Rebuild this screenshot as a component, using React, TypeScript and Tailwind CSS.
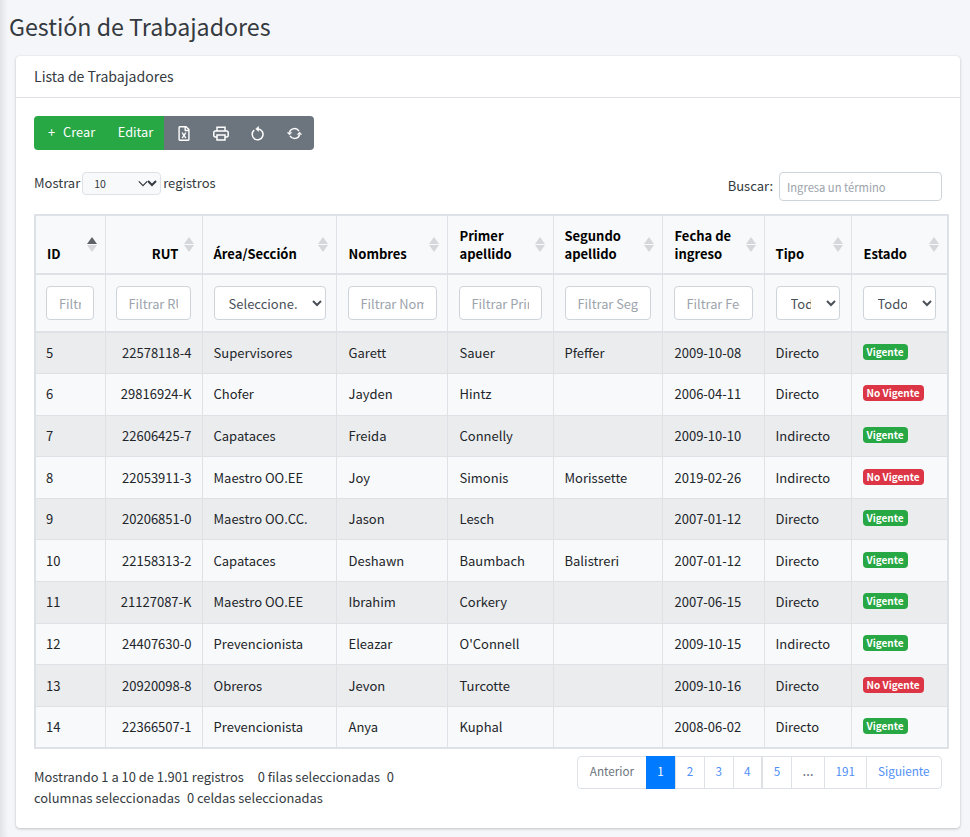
import { FaRegFileExcel } from "react-icons/fa";

const font = { fontFamily: '"Noto Sans CJK JP", "Noto Sans", sans-serif' };

const colWidths = [70, 97, 134, 111, 106, 109, 102, 87, 97];

const cellPad = ["pl-[10px]", "pr-[10px] text-right", "", "pl-[12px]", "pl-[12px]", "", "pl-[12px]", "", ""];

const rows = [
  ["5", "22578118-4", "Supervisores", "Garett", "Sauer", "Pfeffer", "2009-10-08", "Directo", "Vigente"],
  ["6", "29816924-K", "Chofer", "Jayden", "Hintz", "", "2006-04-11", "Directo", "No Vigente"],
  ["7", "22606425-7", "Capataces", "Freida", "Connelly", "", "2009-10-10", "Indirecto", "Vigente"],
  ["8", "22053911-3", "Maestro OO.EE", "Joy", "Simonis", "Morissette", "2019-02-26", "Indirecto", "No Vigente"],
  ["9", "20206851-0", "Maestro OO.CC.", "Jason", "Lesch", "", "2007-01-12", "Directo", "Vigente"],
  ["10", "22158313-2", "Capataces", "Deshawn", "Baumbach", "Balistreri", "2007-01-12", "Directo", "Vigente"],
  ["11", "21127087-K", "Maestro OO.EE", "Ibrahim", "Corkery", "", "2007-06-15", "Directo", "Vigente"],
  ["12", "24407630-0", "Prevencionista", "Eleazar", "O'Connell", "", "2009-10-15", "Indirecto", "Vigente"],
  ["13", "20920098-8", "Obreros", "Jevon", "Turcotte", "", "2009-10-16", "Directo", "No Vigente"],
  ["14", "22366507-1", "Prevencionista", "Anya", "Kuphal", "", "2008-06-02", "Directo", "Vigente"],
];

function SortArrows({ active }: { active?: boolean }) {
  return (
    <span className="absolute right-[8px] top-[21px] flex flex-col gap-[1px]">
      <span className={`h-0 w-0 border-x-[5px] border-b-[7px] border-x-transparent ${active ? "border-b-[#5f6368]" : "border-b-[#d5d7da]"}`} />
      <span className="h-0 w-0 border-x-[5px] border-t-[7px] border-x-transparent border-t-[#d5d7da]" />
    </span>
  );
}

function Th({ children, active, right, wide }: { children: React.ReactNode; active?: boolean; right?: boolean; wide?: boolean }) {
  return (
    <th className={`relative border border-[#dee2e6] border-b-2 px-[11px] pt-[11px] pb-[10px] align-bottom text-[13px] leading-[18px] font-bold text-[#000] ${right ? "text-right pr-[23px]" : "text-left"} ${wide ? "pl-[12px]" : ""}`}>
      {children}
      <SortArrows active={active} />
    </th>
  );
}

function FilterInput({ placeholder, pad = "" }: { placeholder: string; pad?: string }) {
  return (
    <td className={`border border-[#dee2e6] border-b-2 px-[11px] py-[11px] ${pad}`}>
      <input
        placeholder={placeholder}
        className="h-[34px] w-full rounded-[4px] border border-[#ced4da] bg-white px-[12px] text-[12.8px] placeholder:text-[#9ca3ab] outline-none"
      />
    </td>
  );
}

function FilterSelect({ label, pad = "" }: { label: string; pad?: string }) {
  return (
    <td className={`border border-[#dee2e6] border-b-2 px-[11px] py-[11px] ${pad}`}>
      <select className="h-[34px] w-full rounded-[4px] border border-[#ced4da] bg-white pl-[10px] pr-[12px] text-[13px] text-[#495057] outline-none">
        <option>{label}</option>
      </select>
    </td>
  );
}

function PageLink({ children, current, muted, digit, thick }: { children: React.ReactNode; current?: boolean; muted?: boolean; digit?: boolean; thick?: boolean }) {
  const tone = current ? "-my-px h-[33px] border-l-0 bg-[#007bff] text-white" : muted ? "h-full text-[#6c757d]" : "h-full text-[#4f8ff7]";
  return (
    <span className={`flex items-center justify-center border-l border-[#dee2e6] pb-[3px] first:border-l-0 ${digit ? "px-[10.6px]" : "px-[11.5px]"} ${thick ? "border-l-2" : ""} ${tone}`}>
      {children}
    </span>
  );
}

export default function App() {
  return (
    <div style={font} className="relative min-h-[837px] overflow-hidden bg-[#f4f6f9] text-[13px] text-[#343a40]">
      <div className="absolute inset-y-0 left-0 w-[8px] bg-gradient-to-r from-[#e2e3e6] to-[#f4f6f9]" />
      <h1 className="relative pl-[9px] pt-[10px] text-[23.2px] leading-[32px] font-normal text-[#343a40]">Gestión de Trabajadores</h1>

      <div className="relative mt-[14px] ml-[16px] h-[772px] w-[944px] rounded-[4px] bg-white shadow-[0_0_1px_rgba(0,0,0,0.125),0_1px_3px_rgba(0,0,0,0.2)]">
        <div className="flex h-[42px] items-center border-b border-[#dee2e6] px-[18px] text-[14.1px] text-[#343a40]">Lista de Trabajadores</div>

        <div className="px-[18px] pt-[18px]">
          <div className="flex h-[34px] w-[280px] overflow-hidden rounded-[4px] text-white">
            <div className="flex w-[130px] items-center bg-[#28a745] pb-[2px] text-[12.8px]">
              <span className="ml-[14px]">+</span>
              <span className="ml-[8px]">Crear</span>
              <span className="ml-[22.6px]">Editar</span>
            </div>
            <div className="flex flex-1 items-center bg-[#6c757d] pl-[14px]">
              <FaRegFileExcel className="h-[15px] w-[12px]" />
              <svg viewBox="0 0 16 15" className="ml-[23px] h-[15px] w-[16px]" fill="none" stroke="currentColor" strokeWidth="1.5">
                <path d="M4 5V1.2h8V5" />
                <path d="M4 11H2.2A1.4 1.4 0 0 1 .8 9.6V6.4A1.4 1.4 0 0 1 2.2 5h11.6a1.4 1.4 0 0 1 1.4 1.4v3.2a1.4 1.4 0 0 1-1.4 1.4H12" />
                <path d="M4 9h8v5H4z" />
              </svg>
              <svg viewBox="0 0 14 15" className="ml-[22px] h-[15px] w-[14px]" fill="none" stroke="currentColor" strokeWidth="1.5">
                <path d="M3.2 4.2A5.4 5.4 0 1 0 7 3" />
                <path d="M7.6 .2 4.6 2.9l3 2.7z" fill="currentColor" strokeWidth="0.4" />
              </svg>
              <svg viewBox="0 0 16 15" className="ml-[22px] h-[15px] w-[15px]" fill="none" stroke="currentColor" strokeWidth="1.5">
                <path d="M2.6 6.2A5.6 5.6 0 0 1 12.8 5" />
                <path d="M13.4 8.8A5.6 5.6 0 0 1 3.2 10" />
                <path d="M.2 6.4h5L2.6 9.2z" fill="currentColor" strokeWidth="0.4" />
                <path d="M15.8 8.6h-5l2.6-2.8z" fill="currentColor" strokeWidth="0.4" />
              </svg>
            </div>
          </div>

          <div className="mt-[22px] flex items-start justify-between">
            <div className="flex h-[23px] items-center text-[#343a40]">
              <span className="mb-[2px]">Mostrar</span>
              <span className="relative mx-[2px] flex">
                <select className="h-[23px] w-[79px] rounded-[4px] border border-[#dee2e6] bg-[#f8f9fa] pl-[7px] text-[10.5px] text-[#343a40] outline-none">
                  <option>10</option>
                </select>
                <svg viewBox="0 0 12 8" className="pointer-events-none absolute left-[56px] top-[8px] h-[7px] w-[10px]" fill="none" stroke="#343a40" strokeWidth="1.5">
                  <path d="M1 1.5l5 5 5-5" />
                </svg>
              </span>
              <span className="mb-[2px]">registros</span>
            </div>

            <div className="flex items-center">
              <span className="mb-[2px] mr-[6px]">Buscar:</span>
              <input
                placeholder="Ingresa un término"
                className="h-[29px] w-[163px] rounded-[4px] border border-[#ced4da] bg-white px-[7px] text-[11.2px] placeholder:text-[#9ca3ab] outline-none"
              />
            </div>
          </div>

          <table className="mt-[13px] w-[914px] max-w-none table-fixed border-collapse border-2 border-[#dee2e6] bg-[#f8f9fa] text-[13px] text-[#212529]">
            <colgroup>
              {colWidths.map((w, i) => (
                <col key={i} style={{ width: w }} />
              ))}
            </colgroup>
            <thead>
              <tr className="h-[58px]">
                <Th active>ID</Th>
                <Th right>RUT</Th>
                <Th>Área/Sección</Th>
                <Th wide>Nombres</Th>
                <Th wide>Primer apellido</Th>
                <Th>Segundo apellido</Th>
                <Th wide>Fecha de ingreso</Th>
                <Th>Tipo</Th>
                <Th wide>Estado</Th>
              </tr>
              <tr className="h-[58px]">
                <FilterInput placeholder="Filtrar ID" pad="pl-[10px]" />
                <FilterInput placeholder="Filtrar RUT" pad="pl-[10px]" />
                <FilterSelect label="Seleccione..." pad="pr-[10px]" />
                <FilterInput placeholder="Filtrar Nombres" pad="pr-[10px]" />
                <FilterInput placeholder="Filtrar Primer" />
                <FilterInput placeholder="Filtrar Segundo" />
                <FilterInput placeholder="Filtrar Fecha" />
                <FilterSelect label="Todos" />
                <FilterSelect label="Todos" />
              </tr>
            </thead>
            <tbody>
              {rows.map((r, i) => (
                <tr key={r[0]} className={`h-[41.6px] ${i % 2 === 0 ? "bg-[#ebecee]" : "bg-[#f8f9fa]"}`}>
                  {r.map((c, j) => (
                    <td key={j} className={`border border-[#dee2e6] px-[11px] py-0 leading-[20px] whitespace-nowrap ${cellPad[j]}`}>
                      {j === 8 ? (
                        <span className={`relative top-[-2px] inline-block rounded-[4px] px-[4px] text-[10px] leading-[16px] font-bold text-white ${c === "Vigente" ? "bg-[#28a745]" : "bg-[#dc3545]"}`}>{c}</span>
                      ) : (
                        c
                      )}
                    </td>
                  ))}
                </tr>
              ))}
            </tbody>
          </table>

          <div className="mt-[7px] flex items-start justify-between">
            <div className="mt-[10px] w-[370px] text-[12.9px] leading-[21px] text-[#343a40]">
              Mostrando 1 a 10 de 1.901 registros <span className="ml-[11px]">0 filas seleccionadas</span> <span className="ml-[4px]">0 columnas seleccionadas</span> <span className="ml-[4px]">0 celdas seleccionadas</span>
            </div>
            <div className="flex h-[33px] items-center rounded-[4px] border border-[#dee2e6] bg-white text-[11.7px]">
              <PageLink muted>Anterior</PageLink>
              <PageLink current>1</PageLink>
              <PageLink digit>2</PageLink>
              <PageLink digit>3</PageLink>
              <PageLink digit>4</PageLink>
              <PageLink digit thick>5</PageLink>
              <PageLink muted><span className="-mx-[1px] font-['Noto_Sans'] text-[14px]">…</span></PageLink>
              <PageLink digit>191</PageLink>
              <PageLink>Siguiente</PageLink>
            </div>
          </div>
        </div>
      </div>
    </div>
  );
}
